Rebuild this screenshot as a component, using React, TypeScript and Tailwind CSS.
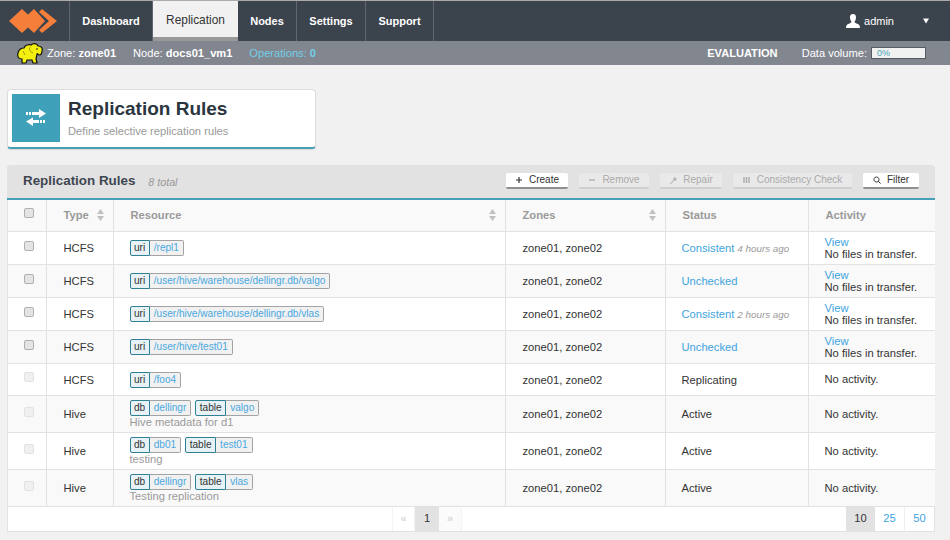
import React from "react";

const Elephant = () => (
  <svg width="28" height="22" viewBox="0 0 28 22" className="shrink-0">
    <path d="M2 10 C3 6 6 5 8 5 C9 2 13 1 15 2 C17 0 21 0 22 3 C25 3 27 5 26 8 C26 10 25 12 23 12 C22 12 22 10 21 11 L20 16 L21 20 L17 20 L16 17 L11 17 L10 20 L6 20 L6 16 C3 16 1 14 2 10 Z" fill="#f5ef10" stroke="#111" strokeWidth="1.2" />
    <path d="M14 4 C13 7 14 9 17 10 M7 8 L9 12" fill="none" stroke="#8a8500" strokeWidth="0.8" />
    <circle cx="21" cy="6" r="0.8" fill="#111" />
  </svg>
);

const Logo = () => (
  <svg width="48" height="24" viewBox="0 0 48 24">
    <path d="M0 12 L13 0 L19 5.5 L25 0 L36 12 L25 24 L19 18.5 L13 24 Z" fill="#f57f3a" />
    <path d="M33 0 L48 12 L33 24 L30 21 L40 12 L30 3 Z" fill="#f57f3a" />
  </svg>
);

const Tag = ({ k, v }: { k: string; v: string }) => (
  <span className="inline-flex h-[16px] text-[10.1px] leading-[14px]">
    <span className="border border-[#2f8094] bg-[#e6f2f5] text-[#333] px-[3.5px] rounded-l-[2px]">{k}</span>
    <span className="border border-l-0 border-[#a3a3a3] bg-[#f1f1f1] text-[#4aa8e0] px-[4px] rounded-r-[2px]">{v}</span>
  </span>
);

const Check = ({ off }: { off?: boolean }) => (
  <span className={`block w-[8px] h-[8px] box-content rounded-[2px] border ml-[16px] -mt-[4px] ${off ? "bg-[#f0f0f0] border-[#e2e2e2]" : "bg-[#e4e4e4] border-[#b0b0b0]"}`} />
);

const Sort = () => (
  <svg width="7" height="12" viewBox="0 0 7 12" className="shrink-0">
    <path d="M3.5 0 L7 5 L0 5 Z M3.5 12 L0 7 L7 7 Z" fill="#c0c0c0" />
  </svg>
);

type Btn = { label: string; off?: boolean; w: string; icon: React.ReactNode };

const buttons: Btn[] = [
  { label: "Create", w: "w-[62px]", icon: <path d="M4 1 V7 M1 4 H7" stroke="currentColor" strokeWidth="1.2" fill="none" /> },
  { label: "Remove", off: true, w: "w-[70px]", icon: <path d="M1 4 H7" stroke="currentColor" strokeWidth="1.2" fill="none" /> },
  { label: "Repair", off: true, w: "w-[62px]", icon: <path d="M1 7.5 L4.5 4 C4 2.5 5 1 7 1 L5.8 2.4 L6.4 3 L7.8 2 C8 4 6.2 5 5 4.5 L1.8 8 Z" fill="currentColor" /> },
  { label: "Consistency Check", off: true, w: "w-[119px]", icon: <path d="M1 1 V7 M3.5 1 V7 M6 1 V7" stroke="currentColor" strokeWidth="1.4" fill="none" /> },
  { label: "Filter", w: "w-[56px]", icon: <path d="M3.5 1 A2.5 2.5 0 1 1 3.4 1 Z M5.2 5.2 L7.6 7.6" stroke="currentColor" strokeWidth="1" fill="none" /> },
];

type Row = {
  type: string;
  tags: [string, string][];
  note?: string;
  status: string;
  ago?: string;
  view: boolean;
  h: string;
};

const rows: Row[] = [
  { type: "HCFS", tags: [["uri", "/repl1"]], status: "Consistent", ago: "4 hours ago", view: true, h: "h-[33px]" },
  { type: "HCFS", tags: [["uri", "/user/hive/warehouse/dellingr.db/valgo"]], status: "Unchecked", view: true, h: "h-[33px]" },
  { type: "HCFS", tags: [["uri", "/user/hive/warehouse/dellingr.db/vlas"]], status: "Consistent", ago: "2 hours ago", view: true, h: "h-[33px]" },
  { type: "HCFS", tags: [["uri", "/user/hive/test01"]], status: "Unchecked", view: true, h: "h-[33px]" },
  { type: "HCFS", tags: [["uri", "/foo4"]], status: "Replicating", view: false, h: "h-[32px]" },
  { type: "Hive", tags: [["db", "dellingr"], ["table", "valgo"]], note: "Hive metadata for d1", status: "Active", view: false, h: "h-[37px]" },
  { type: "Hive", tags: [["db", "db01"], ["table", "test01"]], note: "testing", status: "Active", view: false, h: "h-[37px]" },
  { type: "Hive", tags: [["db", "dellingr"], ["table", "vlas"]], note: "Testing replication", status: "Active", view: false, h: "h-[37px]" },
];

const navs = [
  { t: "Dashboard", w: "w-[83px]" },
  { t: "Replication", w: "w-[85px]", active: true },
  { t: "Nodes", w: "w-[59px]" },
  { t: "Settings", w: "w-[69px]" },
  { t: "Support", w: "w-[68px]" },
];

export default function App() {
  return (
    <div className="w-[950px] h-[540px] overflow-hidden bg-[#f1f1f1] font-['Liberation_Sans',Arial,sans-serif] text-[11.2px] text-[#333]">
      <div className="h-[1px] bg-[#aaaaaa]" />
      <nav className="h-[40px] bg-[#3b434d] flex items-stretch">
        <div className="w-[70px] flex items-center pl-[9px] border-r border-[#5f666f]">
          <Logo />
        </div>
        {navs.map((n) =>
          n.active ? (
            <div key={n.t} className={`${n.w} bg-[#f1f1f1] border-b-[4px] border-[#999999] flex items-center justify-center pt-[4px] text-[#333] text-[11.9px]`}>
              {n.t}
            </div>
          ) : (
            <div key={n.t} className={`${n.w} border-r border-[#5f666f] flex items-center justify-center font-bold text-white text-[11px]`}>
              {n.t}
            </div>
          )
        )}
        <div className="ml-auto flex items-center text-white text-[11px] pr-[20px]">
          <svg width="14" height="14" viewBox="0 0 14 14" className="mr-[4px]">
            <path d="M7 0 C9.2 0 10.2 1.6 10 4 C9.9 5.6 9 7 8.6 7.6 C8.5 8.5 9 9 10.5 9.6 C12.5 10.3 14 11 14 14 L0 14 C0 11 1.5 10.3 3.5 9.6 C5 9 5.5 8.5 5.4 7.6 C5 7 4.1 5.6 4 4 C3.8 1.6 4.8 0 7 0 Z" fill="#fff" />
          </svg>
          <span>admin</span>
          <svg width="8" height="6" viewBox="0 0 8 6" className="ml-[28px]">
            <path d="M1 0.5 H7 L4 5.5 Z" fill="#fff" />
          </svg>
        </div>
      </nav>
      <div className="h-[24px] bg-[#82868f] flex items-center text-white text-[11.1px] pl-[16px] pr-[24px] pt-[1px]">
        <Elephant />
        <span className="ml-[3px]">Zone: <b>zone01</b></span>
        <span className="ml-[17px]">Node: <b>docs01_vm1</b></span>
        <span className="ml-[17px] text-[#71d0e8]">Operations: <b>0</b></span>
        <b className="ml-auto">EVALUATION</b>
        <span className="ml-[24px] mr-[4px]">Data volume:</span>
        <span className="w-[55px] h-[12px] bg-[#f1f1f1] border border-[#555c66] text-[9px] leading-[10px] text-[#4a9fb5] pl-[5px] -mt-[1px]">0%</span>
      </div>

      <div className="px-[7px] pt-[24px]">
        <div className="w-[309px] h-[60px] bg-white rounded-[4px] border border-[#dddddd] border-b-[2px] border-b-[#45a0b8] flex items-start pt-[4px] pl-[4px] shadow-[0_1px_1px_rgba(0,0,0,0.1)]">
          <div className="w-[48px] h-[48px] bg-[#3fa0b9] flex items-center justify-center shrink-0">
            <svg width="22" height="20" viewBox="0 0 22 20">
              <path d="M1 4 H3 V7 H1 Z M4 4 H6 V7 H4 Z M7 4 H14 V1 L21 5.5 L14 10 V7 H7 Z" fill="#fff" />
              <path d="M15 12 H17 V15 H15 Z M18 12 H20 V15 H18 Z M14 12 V15 H8 V18 L1 13.5 L8 9.5 V12 Z" fill="#fff" />
            </svg>
          </div>
          <div className="ml-[8px] mt-[2px]">
            <div className="text-[19px] leading-[26px] font-bold text-[#2b3540]">Replication Rules</div>
            <div className="text-[11.2px] leading-[14px] mt-[2px] text-[#999999]">Define selective replication rules</div>
          </div>
        </div>

        <div className="w-[928px] mt-[16px] bg-white border-x border-b border-[#e2e2e2] rounded-t-[4px]">
          <div className="h-[35px] -mx-[1px] bg-[#e2e2e2] border-b-[2px] border-[#45a0b8] rounded-t-[4px] flex items-center pl-[16px]">
            <span className="text-[13.4px] font-bold text-[#3f4750]">Replication Rules</span>
            <span className="ml-[13px] text-[10.7px] italic text-[#999999] pt-[2px]">8 total</span>
            <div className="ml-auto flex gap-[11px] pr-[16px] pb-[2px]">
              {buttons.map((b) => (
                <div key={b.label} className={`${b.w} h-[16px] rounded-[2px] border-b-[2px] flex items-center justify-center gap-[6px] text-[10px] leading-none ${b.off ? "bg-[#e9e9e9] border-[#cfcfcf] text-[#aaaaaa]" : "bg-white border-[#8f8f8f] text-[#333]"}`}>
                  <svg width="8" height="8" viewBox="0 0 8 8" className="shrink-0">{b.icon}</svg>
                  <span>{b.label}</span>
                </div>
              ))}
            </div>
          </div>
          <table className="w-[927px] table-fixed border-collapse">
            <colgroup>
              <col className="w-[38px]" />
              <col className="w-[67px]" />
              <col className="w-[392px]" />
              <col className="w-[160px]" />
              <col className="w-[143px]" />
              <col />
            </colgroup>
            <thead>
              <tr className="h-[31px] bg-[#f9f9f9] text-[#999999] font-bold text-left">
                <th className="border border-l-0 border-t-0 border-[#e2e2e2]"><Check /></th>
                <th className="border border-t-0 border-[#e2e2e2] pl-[17px] pr-[9px]"><div className="flex items-center justify-between">Type <Sort /></div></th>
                <th className="border border-t-0 border-[#e2e2e2] pl-[17px] pr-[9px]"><div className="flex items-center justify-between">Resource <Sort /></div></th>
                <th className="border border-t-0 border-[#e2e2e2] pl-[17px] pr-[9px]"><div className="flex items-center justify-between">Zones <Sort /></div></th>
                <th className="border border-t-0 border-[#e2e2e2] pl-[17px]">Status</th>
                <th className="border border-t-0 border-r-0 border-[#e2e2e2] pl-[17px]">Activity</th>
              </tr>
            </thead>
            <tbody>
              {rows.map((r, i) => (
                <tr key={i} className={`${r.h} ${i % 2 ? "bg-[#f9f9f9]" : "bg-white"}`}>
                  <td className="border border-l-0 border-[#e2e2e2]"><Check off={!r.view} /></td>
                  <td className="border border-[#e2e2e2] pl-[17px] pt-[2px]">{r.type}</td>
                  <td className="border border-[#e2e2e2] pl-[16px] pt-[1px] leading-[13px]">
                    <div className="flex gap-[4px]">
                      {r.tags.map(([k, v]) => <Tag key={k} k={k} v={v} />)}
                    </div>
                    {r.note && <div className="text-[#999999]">{r.note}</div>}
                  </td>
                  <td className="border border-[#e2e2e2] pl-[17px] pt-[2px]">zone01, zone02</td>
                  <td className="border border-[#e2e2e2] pl-[16px] pt-[2px]">
                    {r.view ? <span className="text-[#3ea4de]">{r.status}</span> : r.status}
                    {r.ago && <span className="ml-[3px] text-[9.8px] italic text-[#999999]">{r.ago}</span>}
                  </td>
                  <td className="border border-r-0 border-[#e2e2e2] pl-[16px] leading-[12px]">
                    {r.view ? (
                      <>
                        <div className="text-[#3ea4de]">View</div>
                        <div>No files in transfer.</div>
                      </>
                    ) : "No activity."}
                  </td>
                </tr>
              ))}
            </tbody>
          </table>
          <div className="h-[24px] flex items-stretch text-center">
            <div className="ml-[384px] flex">
              <span className="w-[23px] border-x border-[#f4f4f4] text-[#cccccc] text-[11px] leading-[23px]">«</span>
              <span className="w-[24px] bg-[#e2e2e2] leading-[23px]">1</span>
              <span className="w-[23px] border-r border-[#f4f4f4] text-[#cccccc] bg-[#fbfbfb] text-[11px] leading-[23px]">»</span>
            </div>
            <div className="ml-auto flex leading-[23px]">
              <span className="w-[29px] bg-[#e2e2e2]">10</span>
              <span className="w-[30px] border-r border-[#eeeeee] text-[#3ea4de]">25</span>
              <span className="w-[29px] text-[#3ea4de]">50</span>
            </div>
          </div>
        </div>
      </div>
    </div>
  );
}
